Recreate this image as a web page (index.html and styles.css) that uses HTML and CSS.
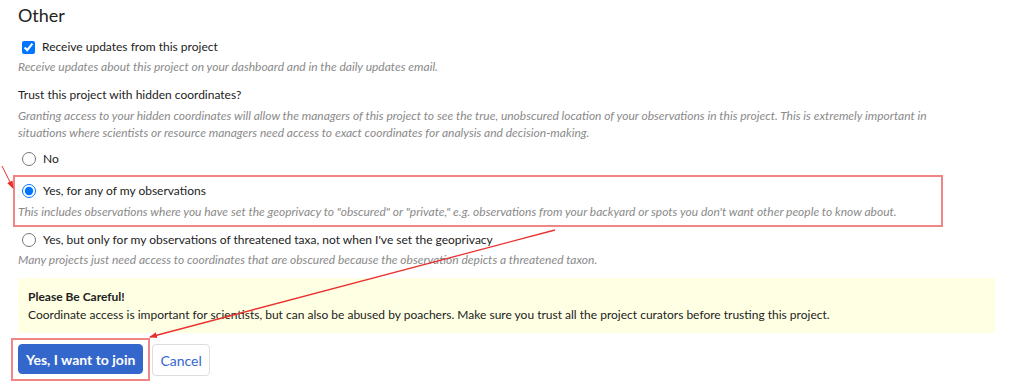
FILE: index.html
```html
<!doctype html>
<html lang="en">

<head>
    <meta charset="utf-8">
    <title>join project</title>
    <link rel="stylesheet" href="styles.css">
</head>

<body>
    <div class="page">
        <h3 class="section-title">Other</h3>

        <div class="field">
            <label class="check-row">
                <input type="checkbox" checked>
                <span>Receive updates from this project</span>
            </label>
            <p class="help">Receive updates about this project on your dashboard and in the daily updates email.</p>
        </div>

        <div class="field">
            <div class="question">Trust this project with hidden coordinates?</div>
            <p class="help para">Granting access to your hidden coordinates will allow the managers of this project to see the true, unobscured location of your observations in this project. This is extremely important in situations where scientists or resource managers need access to exact coordinates for analysis and decision-making.</p>

            <div class="option">
                <label class="check-row">
                    <input type="radio" name="trust">
                    <span>No</span>
                </label>
            </div>

            <div class="option option-marked">
                <label class="check-row">
                    <input type="radio" name="trust" checked>
                    <span>Yes, for any of my observations</span>
                </label>
                <p class="help">This includes observations where you have set the geoprivacy to "obscured" or "private," e.g. observations from your backyard or spots you don't want other people to know about.</p>
            </div>

            <div class="option">
                <label class="check-row">
                    <input type="radio" name="trust">
                    <span>Yes, but only for my observations of threatened taxa, not when I've set the geoprivacy</span>
                </label>
                <p class="help">Many projects just need access to coordinates that are obscured because the observation depicts a threatened taxon.</p>
            </div>
        </div>

        <div class="warning">
            <strong>Please Be Careful!</strong>
            <div>Coordinate access is important for scientists, but can also be abused by poachers. Make sure you trust all the project curators before trusting this project.</div>
        </div>

        <div class="actions">
            <div class="action-marked">
                <button class="btn btn-primary">Yes, I want to join</button>
            </div>
            <button class="btn btn-default">Cancel</button>
        </div>
    </div>

    <!-- annotation arrows -->
    <svg class="annotations" width="1017" height="387" viewBox="0 0 1017 387">
        <defs>
            <marker id="head" markerWidth="8" markerHeight="8" refX="7" refY="4" orient="auto" markerUnits="userSpaceOnUse">
                <path d="M0 1 L8 4 L0 7 z" fill="#e8312f" />
            </marker>
        </defs>
        <line x1="2" y1="166" x2="13" y2="188" stroke="#e8312f" stroke-width="1" marker-end="url(#head)" />
        <line x1="555" y1="230" x2="150" y2="337" stroke="#e8312f" stroke-width="1.3" marker-end="url(#head)" />
    </svg>
</body>

</html>
```

FILE: styles.css
```css
/* base styles */

body {
    margin: 0;
    font-family: Lato, "Open Sans", sans-serif;
    font-size: 12px;
    color: #222;
    background: #fff;
}

.page {
    position: relative;
    padding: 0 22px 0 18px;
}

.section-title {
    margin: 0;
    padding-top: 3px;
    font-size: 18px;
    font-weight: 400;
    line-height: 24px;
    color: #222;
}

.field {
    margin-top: 11px;
}

.check-row {
    display: flex;
    align-items: center;
    gap: 7px;
    line-height: 18px;
}

.check-row input {
    margin: 0 0 0 4px;
    width: 13px;
    height: 13px;
}

.check-row input[type="radio"] {
    width: 14px;
    height: 14px;
}

.help {
    margin: 2px 0 0;
    font-size: 12px;
    font-style: italic;
    line-height: 17px;
    color: #8a8a8a;
}

.question {
    margin-top: 10px;
    line-height: 18px;
}

.para {
    margin-top: 3px;
    padding-right: 50px;
}

.option {
    margin-top: 9px;
}

/* red highlight around the chosen answer */
.option-marked {
    margin: 7px 0 0 -5px;
    width: 923px;
    border: 2px solid #ef8585;
    padding: 5px 0 5px 3px;
}

.option-marked + .option {
    margin-top: 4px;
}

.option-marked .help {
    margin-top: 3px;
}

.warning {
    margin-top: 10px;
    background: #ffffe3;
    padding: 10px 10px 9px;
    line-height: 18px;
}

.warning strong {
    font-weight: 700;
    display: block;
}

.actions {
    display: flex;
    align-items: flex-start;
    gap: 2px;
    margin-top: 5px;
}

.action-marked {
    margin-left: -7px;
    border: 2px solid #ef8585;
    padding: 4px 5px 5px;
}

.btn {
    font-family: Lato, "Open Sans", sans-serif;
    font-size: 14px;
    border-radius: 4px;
    height: 30px;
    padding: 0 7px;
    cursor: pointer;
}

.btn-primary {
    background: #3467cc;
    color: #fff;
    border: 1px solid #3467cc;
    font-weight: 700;
}

.btn-default {
    margin-top: 6px;
    height: 32px;
    background: #fff;
    color: #3467cc;
    border: 1px solid #ddd;
    font-weight: 400;
}

.annotations {
    position: absolute;
    left: 0;
    top: 0;
    pointer-events: none;
}
```
